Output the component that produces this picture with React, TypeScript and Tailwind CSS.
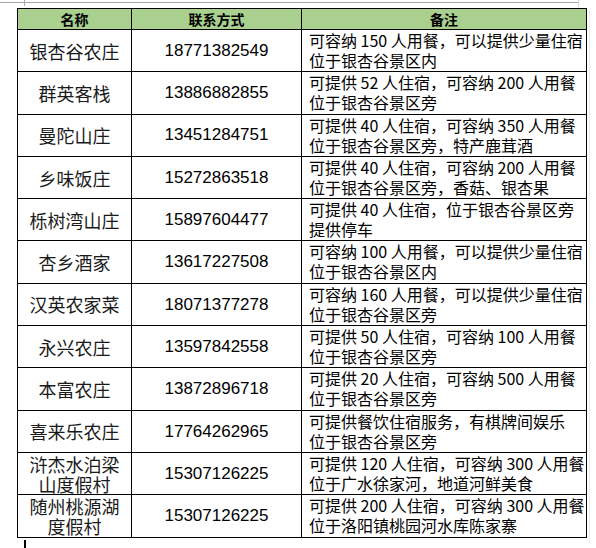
const rows = [
  { name: '银杏谷农庄', phone: '18771382549', note: ['可容纳 150 人用餐，可以提供少量住宿', '位于银杏谷景区内'] },
  { name: '群英客栈', phone: '13886882855', note: ['可提供 52 人住宿，可容纳 200 人用餐', '位于银杏谷景区旁'] },
  { name: '曼陀山庄', phone: '13451284751', note: ['可提供 40 人住宿，可容纳 350 人用餐', '位于银杏谷景区旁，特产鹿茸酒'] },
  { name: '乡味饭庄', phone: '15272863518', note: ['可提供 40 人住宿，可容纳 200 人用餐', '位于银杏谷景区旁，香菇、银杏果'] },
  { name: '栎树湾山庄', phone: '15897604477', note: ['可提供 40 人住宿，位于银杏谷景区旁', '提供停车'] },
  { name: '杏乡酒家', phone: '13617227508', note: ['可容纳 100 人用餐，可以提供少量住宿', '位于银杏谷景区内'] },
  { name: '汉英农家菜', phone: '18071377278', note: ['可容纳 160 人用餐，可以提供少量住宿', '位于银杏谷景区旁'] },
  { name: '永兴农庄', phone: '13597842558', note: ['可提供 50 人住宿，可容纳 100 人用餐', '位于银杏谷景区旁'] },
  { name: '本富农庄', phone: '13872896718', note: ['可提供 20 人住宿，可容纳 500 人用餐', '位于银杏谷景区旁'] },
  { name: '喜来乐农庄', phone: '17764262965', note: ['可提供餐饮住宿服务，有棋牌间娱乐', '位于银杏谷景区旁'] },
  { name: '浒杰水泊梁山度假村', phone: '15307126225', note: ['可提供 120 人住宿，可容纳 300 人用餐', '位于广水徐家河，地道河鲜美食'] },
  { name: '随州桃源湖度假村', phone: '15307126225', note: ['可提供 200 人住宿，可容纳 300 人用餐', '位于洛阳镇桃园河水库陈家寨'] },
];

const cjk = "font-['Noto_Sans_CJK_SC',sans-serif]";

function App() {
  const headers = ['名称', '联系方式', '备注'];

  return (
    <div className="relative w-[596px] h-[548px] overflow-hidden bg-white text-black">
      {/* page edge marks */}
      <div className="h-[2px]" />
      <div className="h-px w-[578px] bg-[#a8a8a8]" />
      <div className="absolute left-[24px] top-0 h-[6px] w-px bg-[#a8a8a8]" />
      <div className="absolute left-[578px] top-0 h-[7px] w-px bg-[#d4d4d4]" />

      <div className="pl-[17px] pt-[5px]">
        <table className="border-collapse table-fixed w-[569px]">
          <colgroup>
            <col className="w-[114px]" />
            <col className="w-[170px]" />
            <col className="w-[285px]" />
          </colgroup>
          <thead>
            <tr className="h-[21px] bg-[#a9d08e]">
              {headers.map(i => (
                <th key={i} className={`border border-black p-0 text-center text-[14px] leading-[18px] font-bold ${cjk}`}>
                  {i}
                </th>
              ))}
            </tr>
          </thead>
          <tbody>
            {rows.map((row, idx) => (
              <tr key={idx} className="h-[42.3px]">
                <td className={`border border-black px-[7px] py-0 text-center align-middle text-[18px] leading-[20px] text-[#1a1a1a] ${cjk}`}>
                  {row.name}
                </td>
                <td className="border border-black p-0 text-center align-middle text-[17px] font-['Liberation_Sans',sans-serif]">
                  {row.phone}
                </td>
                <td className={`border border-black pl-[7px] pr-0 py-0 align-top text-[16px] leading-[20px] whitespace-nowrap ${cjk}`}>
                  <div>{row.note[0]}</div>
                  <div>{row.note[1]}</div>
                </td>
              </tr>
            ))}
          </tbody>
        </table>
      </div>

      {/* faint page shadow and text cursor */}
      <div className="absolute left-[589px] top-[10px] h-[533px] w-px bg-[#ececec]" />
      <div className="absolute left-[24px] top-[540px] h-[8px] w-[2px] bg-black" />
    </div>
  );
}

export default App;
